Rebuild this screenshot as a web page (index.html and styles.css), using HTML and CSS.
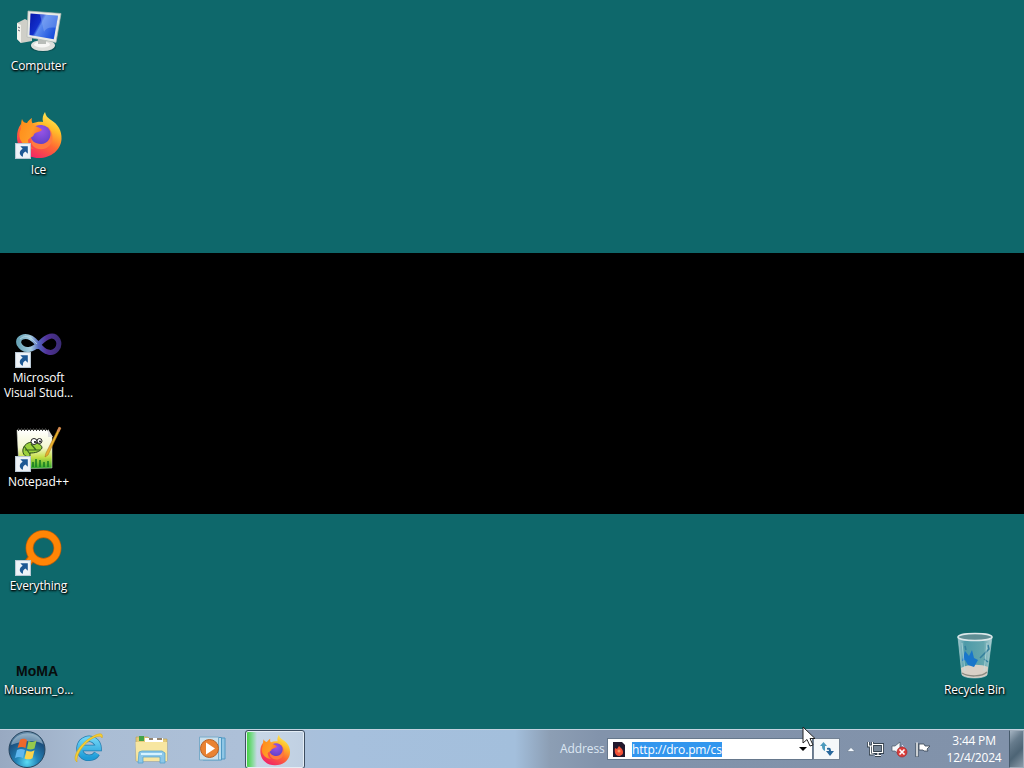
FILE: index.html
```html
<!DOCTYPE html>
<html lang="en">
<head>
<meta charset="utf-8">
<title>Desktop</title>
<link rel="stylesheet" href="styles.css">
</head>
<body>
<svg class="defs" width="0" height="0" aria-hidden="true">
  <defs>
    <linearGradient id="flame" x1=".85" y1="0" x2=".3" y2="1"><stop offset="0" stop-color="#fff36a"/><stop offset=".3" stop-color="#ffc02a"/><stop offset=".6" stop-color="#ff6a33"/><stop offset="1" stop-color="#f0206a"/></linearGradient>
    <linearGradient id="fox" x1="0" y1="0" x2="1" y2=".6"><stop offset="0" stop-color="#ff8a16"/><stop offset=".6" stop-color="#ff9c28"/><stop offset="1" stop-color="#ff5a38"/></linearGradient>
    <radialGradient id="globe" cx=".5" cy=".3" r=".8"><stop offset="0" stop-color="#9a55e8"/><stop offset="1" stop-color="#5b3fc4"/></radialGradient>
    <linearGradient id="screen" x1="0" y1="0" x2="1" y2=".5"><stop offset="0" stop-color="#0716a8"/><stop offset=".42" stop-color="#1230cc"/><stop offset=".5" stop-color="#5c8cf0"/><stop offset="1" stop-color="#1a50dc"/></linearGradient>
    <linearGradient id="loop" x1="0" y1="0" x2="1" y2="0"><stop offset="0" stop-color="#6ba5b8"/><stop offset=".3" stop-color="#a5cce0"/><stop offset=".5" stop-color="#5264bd"/><stop offset=".7" stop-color="#513198"/><stop offset="1" stop-color="#3c2c77"/></linearGradient>
    <linearGradient id="note" x1="0" y1="0" x2="0" y2="1"><stop offset="0" stop-color="#fff"/><stop offset=".45" stop-color="#f5f8d0"/><stop offset=".7" stop-color="#c5df45"/><stop offset="1" stop-color="#25a32d"/></linearGradient>
    <radialGradient id="orb" cx=".5" cy=".85" r=".85"><stop offset="0" stop-color="#5bdcf4"/><stop offset=".35" stop-color="#2384b8"/><stop offset=".75" stop-color="#1b4f7e"/><stop offset="1" stop-color="#7297b2"/></radialGradient>
    <linearGradient id="glass" x1="0" y1="0" x2="1" y2="0"><stop offset="0" stop-color="#9fc5cc"/><stop offset=".2" stop-color="#4d9aa8"/><stop offset=".75" stop-color="#64a6ae"/><stop offset="1" stop-color="#b1d0d4"/></linearGradient>
    <linearGradient id="ie" x1="0" y1="0" x2="0" y2="1"><stop offset="0" stop-color="#6dd3f5"/><stop offset="1" stop-color="#1e9bd7"/></linearGradient>
    <symbol id="shortcut" viewBox="0 0 15 15"><rect width="15" height="15" fill="#eef3f8"/><rect x=".5" y=".5" width="14" height="14" fill="none" stroke="#b9c8d4"/><path d="M5 3h7v7L9.8 8C7.8 9 7.2 10.600 7.500 13 3.800 11.500 3.300 7.500 7.200 5.300z" fill="#1d5894"/></symbol>
    <symbol id="firefox" viewBox="0 0 48 48">
      <path d="M30 1c1 4 2 5 6 8 7 4 11 11 10.500 19C46 39 36 47 24 47 11 47 2 38 2 26c0-5 1-9 4-13 0 3 1 4 2 5 7-6 15-8 20-7-1-4 0-7 2-10z" fill="url(#flame)"/>
      <path d="M33 16c5 5 6 13 2 18-4 5-12 6-17 1-2-2-2-5-1-8l5-8z" fill="#ff7940"/>
      <path d="M17 18c5-6 15-5 18 2 2 6-2 13-9 13-6 0-11-4-10-9z" fill="url(#globe)"/>
      <path d="M6 18c0-4 0-7 1-10 1 3 3 4 5 4 1-2 3-4 5-5-1 3 0 5 2 7 2 2 6 2 8 5-2 2-6 2-8 4 0 3-4 3-6 6 0 3 2 7 6 9-7-1-12-5-14-10-1-3-1-7 1-10z" fill="url(#fox)"/>
    </symbol>
  </defs>
</svg>

<main class="desktop">
  <div class="icon computer">
    <svg width="48" height="48" viewBox="15 8 48 48">
      <path d="M17 23l8-4 7 4v18l-11 2-4-4z" fill="#cfcfc8"/><path d="M17 23l4 2v18l-4-4z" fill="#f2f2ec"/><path d="M18 27l2 1M18 30l2 1" stroke="#667" fill="none"/>
      <ellipse cx="43" cy="47" rx="13" ry="5" fill="#0a3d40" opacity=".5"/>
      <ellipse cx="43" cy="45.500" rx="12" ry="5.500" fill="#dedfdb"/><ellipse cx="42" cy="44.500" rx="8" ry="3" fill="#f7f7f5"/><path d="M38 38h8v6h-8z" fill="#b9bdb9"/>
      <path d="M28 11l33 2.500L56 42.500 27 37z" fill="#e8eae6" stroke="#b0b7b2" stroke-width=".7"/><path d="M30.500 13.500L58 15.800 53.800 39.200 29.500 35z" fill="url(#screen)"/><path d="M40 14.500l18 1.300-2 12c-6-1-10 0-12 4z" fill="#8bb0f5" opacity=".45"/>
    </svg>
    <span>Computer</span>
  </div>
  <div class="icon ice">
    <svg width="48" height="48" viewBox="0 0 48 48"><use href="#firefox" width="48" height="48"/><use href="#shortcut" y="32" width="16" height="16"/></svg>
    <span>Ice</span>
  </div>
  <div class="icon studio">
    <svg width="48" height="48" viewBox="15 320 48 48">
      <path d="M19 344c5 9 14 6 21-1s14-10 18-3c3 7-3 14-10 12-7-1-10-10-17-14-6-3-14-1-12 6z" fill="none" stroke="url(#loop)" stroke-width="5"/>
      <path d="M20 339c6-5 11-2 17 5" fill="none" stroke="#c4e0e9" stroke-width="1" opacity=".7"/>
      <use href="#shortcut" x="15" y="352" width="16" height="16"/>
    </svg>
    <span>Microsoft</span><span>Visual Stud...</span>
  </div>
  <div class="icon notepad">
    <svg width="48" height="48" viewBox="15 423 48 48">
      <path d="M17 429h30l5 7v31l-33 1z" fill="url(#note)" stroke="#dfe3d5" stroke-width=".5"/>
      <path d="M18 428.500h30" stroke="#333" stroke-width="3" stroke-dasharray="1 2"/>
      <path d="M48 428v8h5z" fill="#ddd"/>
      <path d="M23 448c2-6 7-8 13-6 3 1 6 2 6 5-2 4-7 5-12 5v4c-4 0-8-2-7-8z" fill="#9bd13c" stroke="#294a18"/>
      <path d="M25 449h15M24 445l6 8M31 443l5 6" stroke="#36611c" stroke-width="1.200"/>
      <circle cx="34" cy="440.500" r="3" fill="#fff" stroke="#222"/><circle cx="39.500" cy="440" r="2.500" fill="#fff" stroke="#222"/><circle cx="35" cy="441" r="1"/><circle cx="40" cy="440.500" r=".9"/>
      <path d="M33 466v-5m3 5v-8m4 8v-7m4 7v-5m4 5v-6" stroke="#137a20" stroke-width="1.500"/>
      <path d="M59 426l2 1-13 27-3 2 1-4z" fill="#e7b12d" stroke="#a4661b" stroke-width=".5"/><path d="M59 426l2 1-2 4-2-1z" fill="#d68b5c"/>
      <use href="#shortcut" x="15" y="455" width="16" height="16"/>
    </svg>
    <span>Notepad++</span>
  </div>
  <div class="icon everything">
    <svg width="48" height="48" viewBox="15 527 48 48">
      <path d="M34 554l-7 9" stroke="#b85b07" stroke-width="8"/><circle cx="43.500" cy="547" r="14" fill="none" stroke="#b95f0c" stroke-width="8"/><path d="M34 554l-7 9" stroke="#ff8505" stroke-width="6"/><circle cx="43.500" cy="547" r="14" fill="none" stroke="#ff8505" stroke-width="6.500"/>
      <use href="#shortcut" x="15" y="559" width="16" height="16"/>
    </svg>
    <span>Everything</span>
  </div>
  <div class="icon museum">
    <b>MoMA</b>
    <span>Museum_o...</span>
  </div>
  <div class="icon recycle">
    <svg width="48" height="48" viewBox="951 631 48 48">
      <path d="M958 636l4 38c3 4 22 4 25 0l5-38z" fill="url(#glass)" stroke="#9fc8cb" stroke-width=".7"/>
      <path d="M961 667c7-4 20-4 27-1l-1 8c-5 4-20 4-25 0z" fill="#d8d0c6"/><path d="M962 672c6 4 20 4 25-1" fill="none" stroke="#8b8b82" stroke-width="1.500"/>
      <path d="M965 650l4 5 3-6 2 8 4 2-4 7-6-2-3-5-3 1z" fill="#1976ca"/><path d="M980 657l9-9-1-4m-4 14l4 3m-23-16l1 4" fill="none" stroke="#347f9d" stroke-width="1.500"/>
      <path d="M962 642l3 28M987 642l-3 28" stroke="#c5e2e5" opacity=".6"/>
      <ellipse cx="975" cy="636" rx="17" ry="3.500" fill="#5f8d93" stroke="#dbe7e9" stroke-width="1.500"/>
    </svg>
    <span>Recycle Bin</span>
  </div>
  <svg class="cursor" width="14" height="21" viewBox="0 0 14 21"><path d="M1 1v16l4-3.500L8 20l3-1-3-6.500h5z" fill="#fff" stroke="#222"/></svg>
</main>

<footer class="taskbar">
  <div class="start">
    <svg width="40" height="38" viewBox="7 729 40 38">
      <circle cx="27" cy="748.500" r="18" fill="url(#orb)" stroke="#28465f"/><path d="M11 744c3-14 28-17 32-1-10-5-20-3-32 1z" fill="#dcebf2" opacity=".45"/>
      <path d="M20 739c3-2 5-1 7 0l-1.500 8c-3-1.500-5-1.500-8 0z" fill="#ee682b"/><path d="M28.500 740c3 1.300 5 1.300 8-.7l-2 8.200c-3 1.500-5 1.300-7.500.3z" fill="#95c94c"/><path d="M17 749c3-1.500 5-1.500 8 0l-2 8c-3-1.500-5-1.500-8 0z" fill="#5fb7ef"/><path d="M26.500 749.500c3 1.300 5 1.300 8-.3l-2 8c-3 1.500-5 1.500-8 .3z" fill="#fbd34b"/>
    </svg>
  </div>
  <div class="launch">
    <svg width="34" height="34" viewBox="73 732 34 34">
      <path d="M97 753.500A9.500 9.500 0 1 1 98.500 748H82" fill="none" stroke="#237caf" stroke-width="6.500"/><path d="M97 753.500A9.500 9.500 0 1 1 98.500 748H82" fill="none" stroke="url(#ie)" stroke-width="5"/>
      <path d="M77 762c-6-4 3-18 13-24 8-5 14-6 12 0-1-3-6-2-12 2-8 6-14 15-13 22z" fill="#f6cf35" stroke="#d9a91c" stroke-width=".6"/>
    </svg>
  </div>
  <div class="launch">
    <svg width="34" height="34" viewBox="134 732 34 34">
      <path d="M136 737h12l2 2h17v22h-31z" fill="#e5cb78" stroke="#baa052" stroke-width=".6"/><path d="M139 736h5v5h-5z" fill="#43a348"/><path d="M145 738h18v5h-18z" fill="#fff"/><path d="M149 739h4m4 0h5" stroke="#725c42" stroke-width="1.500"/>
      <path d="M135.500 742h31.500v19h-30.500z" fill="#f7e6a1"/><path d="M138 763l1-11 3-1h20l3 2v10h-5v-6h-17v6z" fill="#8cc7e8" stroke="#4b9dca" stroke-width=".7"/><path d="M141 754h21" stroke="#d6f3ff" stroke-width="2"/>
    </svg>
  </div>
  <div class="launch">
    <svg width="34" height="34" viewBox="195 732 34 34">
      <path d="M207 738h18v21h-18z" fill="#8fc6e5" stroke="#4e98c3"/><path d="M203 737.500h18.500v22.500H203z" fill="#b7dcef" stroke="#4e98c3"/><path d="M199.500 737h19v23h-19z" fill="#c8dfec" stroke="#78aac8"/>
      <circle cx="209.500" cy="748.500" r="9" fill="#e98232" stroke="#b96226"/><path d="M206 742.500l9 6-9 6z" fill="#fff"/>
    </svg>
  </div>
  <div class="task"><svg width="32" height="32" viewBox="0 0 48 48"><use href="#firefox" width="48" height="48"/></svg></div>
  <div class="tray">
    <span class="address">Address</span>
    <div class="field">
      <svg width="12" height="15" viewBox="0 0 12 15"><path d="M0 0h9l3 3v12H0z" fill="#21182d"/><path d="M2 6l2 1 2-3 3 3c3 5-1 7-3 7-3 0-5-3-4-8z" fill="#f45138"/><circle cx="6" cy="9" r="1.500" fill="#ff9e68"/></svg>
      <span class="url">http://dro.pm/cs</span>
      <svg class="drop" width="8" height="5"><path d="M0 0h8L4 4z"/></svg>
    </div>
    <div class="go"><svg width="18" height="18" viewBox="0 0 18 18"><path d="M7 9V6H9L5.500 2 2 6h2c0 3 1 4 3 5z" fill="#4c9abd"/><path d="M9 8c3-1 4 0 4 3h3l-4 5-4-5h3c0-1-1-2-2-1z" fill="#28679c"/></svg></div>
    <svg class="chevron" width="8" height="5"><path d="M0 4.500L4 .5l4 4z" fill="#f5faff" stroke="#56687c" stroke-width=".5"/></svg>
    <svg class="net" width="17" height="17" viewBox="0 0 17 17"><path d="M5.500 3.500h10v8h-10zM8 14.500h6m-3-3v3M1.500 1v4h4V1m-2 4v8h3" fill="none" stroke="#35424f" stroke-width="3"/><path d="M5.500 3.500h10v8h-10zM8 14.500h6m-3-3v3M1.500 1v4h4V1m-2 4v8h3" fill="none" stroke="#fff" stroke-width="1.200"/><path d="M7 5h7v5H7z" fill="#758596"/></svg>
    <svg class="sound" width="17" height="17" viewBox="0 0 17 17"><path d="M1 5h3l5-4v13l-5-4H1z" fill="#f6f8fa" stroke="#485766" stroke-width=".7"/><path d="M11 4c2 2 2 3 2 5" fill="none" stroke="#eef"/><circle cx="11" cy="11" r="5" fill="#d93e3b" stroke="#a51f24" stroke-width=".6"/><path d="M8.500 8.500l5 5m0-5l-5 5" stroke="#fff" stroke-width="1.600"/></svg>
    <svg class="flag" width="16" height="17" viewBox="0 0 16 17"><path d="M2 2v14" stroke="#354350" stroke-width="3"/><path d="M2 1.500v14" stroke="#fff" stroke-width="1.500"/><path d="M4 3h5l1 2h5l-3 3 1 2H9L8 9H4z" fill="#fff" stroke="#354350" stroke-width=".8"/></svg>
    <div class="clock"><span>3:44 PM</span><span>12/4/2024</span></div>
    <div class="peek"></div>
  </div>
</footer>
</body>
</html>
```
FILE: styles.css
```css
* { box-sizing: border-box; }
body { margin: 0; width: 1024px; height: 768px; overflow: hidden; display: flex; flex-direction: column; font: 12px/15px "Open Sans", "Noto Sans", sans-serif; }
svg { display: block; flex: none; }
.defs { position: absolute; }
.desktop { position: relative; height: 729px; flex: none; background: linear-gradient(#0e686b 0 253px, #000 253px 514px, #0e686b 514px); }
.icon { position: absolute; left: 0; width: 77px; display: flex; flex-direction: column; align-items: center; color: #fff; text-shadow: 1px 1px 2px #000, 0 1px 2px #000; white-space: nowrap; }
.icon svg, .icon b { margin-bottom: 2px; }
.icon span { letter-spacing: -.15px; }
.computer { top: 8px; }
.ice { top: 111px; }
.ice svg { margin-bottom: 3px; }
.studio { top: 320px; }
.notepad { top: 424px; }
.everything { top: 528px; }
.museum { top: 663px; }
.museum b { color: #080c0c; font: bold 14px/16px "Liberation Sans", sans-serif; text-shadow: none; margin-bottom: 3px; padding-right: 3px; }
.recycle { top: 632px; left: 936px; }
.cursor { position: absolute; left: 802px; top: 726px; z-index: 2; }

.taskbar { height: 39px; flex: none; display: flex; border-top: 1px solid #c2d2e0; background: linear-gradient(90deg, #98a9c1, #aabdd4 90px, #adc0d8 240px, #a6c0dd 350px, #a3bfdc 515px, #8c9eb4 550px, #8293ab 600px, #8192aa); }
.start { width: 59px; padding-left: 7px; }
.launch { width: 61px; display: flex; align-items: center; justify-content: center; }
.task { width: 60px; margin-left: 3px; height: 39px; display: flex; align-items: center; justify-content: center; border: 1px solid #3d4d60; border-radius: 3px; background: linear-gradient(90deg, #37ce36, #8cdca0 7px, #c8d7e7 11px, #c0d0e2); box-shadow: inset 0 0 0 1px #e4edf5; }
.tray { margin-left: auto; width: 464px; display: flex; align-items: center; }
.address { width: 47px; color: #dce7f3; letter-spacing: -.1px; margin-top: -1px; }
.field { width: 206px; height: 22px; display: flex; align-items: center; padding: 0 5px; background: #fff; border: 1px solid #66788c; }
.url { margin-left: 7px; background: #3296ee; color: #fff; letter-spacing: -.15px; }
.drop { margin-left: auto; }
.go { width: 27px; height: 22px; display: flex; align-items: center; justify-content: center; background: #f5f8fa; border: 1px solid #738294; }
.chevron { margin-left: 7px; }
.net { margin-left: 12px; }
.sound { margin-left: 7px; }
.flag { margin-left: 7px; }
.clock { width: 70px; margin-left: auto; display: flex; flex-direction: column; align-items: center; color: #fff; line-height: 17px; letter-spacing: -.2px; }
.peek { width: 15px; height: 38px; background: linear-gradient(135deg, #a5b4c2, #667b8c 30%, #4d6475 60%, #8b9ba9); border: 1px solid #9eacba; border-left-color: #465a6c; }
```
